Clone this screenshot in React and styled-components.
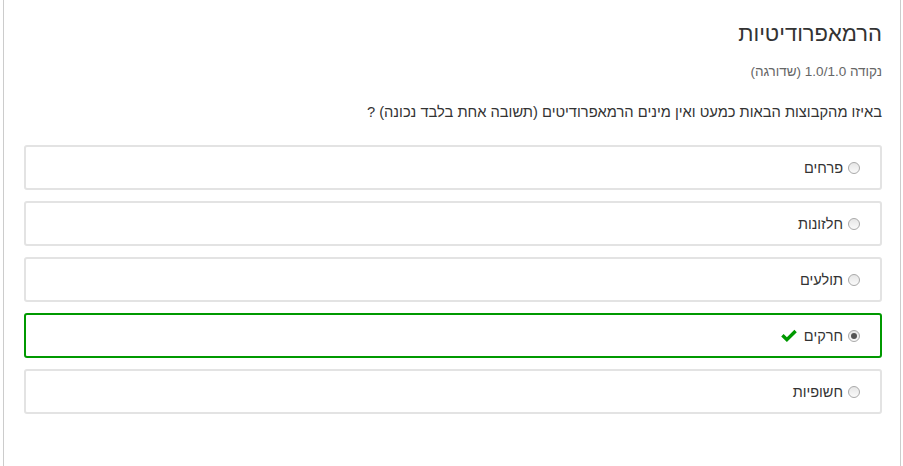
import React from 'react'
import styled, { createGlobalStyle } from 'styled-components'

const GlobalStyle = createGlobalStyle`
  html, body {
    margin: 0;
    padding: 0;
    background: #fff;
  }
  body {
    font-family: "Liberation Sans", Arial, sans-serif;
    color: #333;
  }
`

const options = [
  { label: 'פרחים' },
  { label: 'חלזונות' },
  { label: 'תולעים' },
  { label: 'חרקים', checked: true, correct: true },
  { label: 'חשופיות' },
]

const App = () => {
  return (
    <>
      <GlobalStyle />
      <Panel dir="rtl">
        <Title>הרמאפרודיטיות</Title>
        <Grade>נקודה 1.0/1.0 (שדורגה)</Grade>
        <Question>באיזו מהקבוצות הבאות כמעט ואין מינים הרמאפרודיטים (תשובה אחת בלבד נכונה) ?</Question>
        <Options>
          {options.map((o) => (
            <Option key={o.label} $correct={o.correct}>
              <Radio $checked={o.checked} />
              <Label>{o.label}</Label>
              {o.correct && <Check />}
            </Option>
          ))}
        </Options>
      </Panel>
    </>
  )
}

export default App

const Check = () => (
  <CheckIcon viewBox="0 0 18 14" width="18" height="14">
    <path d="M1.2 7.4 L3.6 5 L6.9 8.3 L14.4 0.8 L16.8 3.2 L6.9 13.1 Z" fill="#090" />
  </CheckIcon>
)

const Panel = styled.div`
  box-sizing: border-box;
  width: 898px;
  min-height: 466px;
  margin-left: 3px;
  border-left: 1px solid #ccc;
  border-right: 1px solid #ccc;
  padding: 20px 18px 0 20px;
  direction: rtl;
`

const Title = styled.h2`
  margin: 0;
  font-size: 22px;
  font-weight: normal;
  line-height: 28px;
  color: #333;
`

const Grade = styled.div`
  margin-top: 16px;
  font-size: 13.5px;
  line-height: 16px;
  color: #666;
`

const Question = styled.p`
  margin: 22px 0 0;
  font-size: 14.7px;
  line-height: 20px;
  color: #333;
`

const Options = styled.div`
  display: flex;
  flex-direction: column;
  gap: 11px;
  margin-top: 23px;
`

const Option = styled.label`
  box-sizing: border-box;
  display: flex;
  align-items: center;
  height: 45px;
  padding: 0 20px;
  border: 2px solid ${(p) => (p.$correct ? '#090' : '#e3e3e3')};
  border-radius: 3px;
  font-size: 14.5px;
  color: #333;
`

const Radio = styled.span`
  box-sizing: border-box;
  position: relative;
  width: 12px;
  height: 12px;
  border-radius: 50%;
  border: 1px solid #a9a9a9;
  background: linear-gradient(#e6e6e6, #fafafa);
  margin-left: 5px;
  flex: none;

  &::after {
    content: '';
    display: ${(p) => (p.$checked ? 'block' : 'none')};
    position: absolute;
    left: 2px;
    top: 2px;
    width: 6px;
    height: 6px;
    border-radius: 50%;
    background: #555;
  }
`

const Label = styled.span`
  line-height: 20px;
`

const CheckIcon = styled.svg`
  margin-right: 6px;
  flex: none;
`
